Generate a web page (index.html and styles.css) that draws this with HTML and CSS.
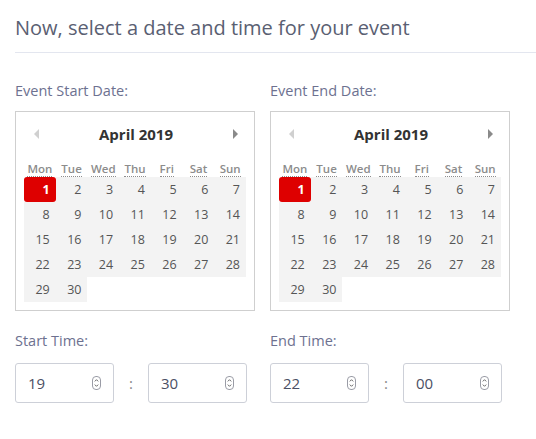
FILE: index.html
```html
<!DOCTYPE html>
<html>
<head>
<meta charset="utf-8">
<link rel="stylesheet" href="styles.css">
</head>
<body>
<div class="page">
  <h1 class="heading">Now, select a date and time for your event</h1>
  <div class="cols">
    <div class="col">
      <div class="label">Event Start Date:</div>
      <div class="cal">
        <div class="cal-head">
          <span class="arrow prev"></span>
          <span class="cal-title">April 2019</span>
          <span class="arrow next"></span>
        </div>
        <div class="dow">
          <span><abbr>Mon</abbr></span><span><abbr>Tue</abbr></span><span><abbr>Wed</abbr></span><span><abbr>Thu</abbr></span><span><abbr>Fri</abbr></span><span><abbr>Sat</abbr></span><span><abbr>Sun</abbr></span>
        </div>
        <div class="days">
          <span class="sel">1</span><span>2</span><span>3</span><span>4</span><span>5</span><span>6</span><span>7</span>
          <span>8</span><span>9</span><span>10</span><span>11</span><span>12</span><span>13</span><span>14</span>
          <span>15</span><span>16</span><span>17</span><span>18</span><span>19</span><span>20</span><span>21</span>
          <span>22</span><span>23</span><span>24</span><span>25</span><span>26</span><span>27</span><span>28</span>
          <span>29</span><span>30</span>
        </div>
      </div>
      <div class="label time-label">Start Time:</div>
      <div class="time">
        <div class="num"><span>19</span><i class="spin"><svg viewBox="0 0 9 14" width="9" height="14"><rect x="0.5" y="0.5" width="8" height="13" rx="3.5" fill="none" stroke="#9a9ca6"/><path d="M2.8 5.4 L4.5 3.7 L6.2 5.4 M2.8 8.6 L4.5 10.3 L6.2 8.6" fill="none" stroke="#555" stroke-width="0.9"/></svg></i></div>
        <span class="colon">:</span>
        <div class="num"><span>30</span><i class="spin"><svg viewBox="0 0 9 14" width="9" height="14"><rect x="0.5" y="0.5" width="8" height="13" rx="3.5" fill="none" stroke="#9a9ca6"/><path d="M2.8 5.4 L4.5 3.7 L6.2 5.4 M2.8 8.6 L4.5 10.3 L6.2 8.6" fill="none" stroke="#555" stroke-width="0.9"/></svg></i></div>
      </div>
    </div>
    <div class="col">
      <div class="label">Event End Date:</div>
      <div class="cal">
        <div class="cal-head">
          <span class="arrow prev"></span>
          <span class="cal-title">April 2019</span>
          <span class="arrow next"></span>
        </div>
        <div class="dow">
          <span><abbr>Mon</abbr></span><span><abbr>Tue</abbr></span><span><abbr>Wed</abbr></span><span><abbr>Thu</abbr></span><span><abbr>Fri</abbr></span><span><abbr>Sat</abbr></span><span><abbr>Sun</abbr></span>
        </div>
        <div class="days">
          <span class="sel">1</span><span>2</span><span>3</span><span>4</span><span>5</span><span>6</span><span>7</span>
          <span>8</span><span>9</span><span>10</span><span>11</span><span>12</span><span>13</span><span>14</span>
          <span>15</span><span>16</span><span>17</span><span>18</span><span>19</span><span>20</span><span>21</span>
          <span>22</span><span>23</span><span>24</span><span>25</span><span>26</span><span>27</span><span>28</span>
          <span>29</span><span>30</span>
        </div>
      </div>
      <div class="label time-label">End Time:</div>
      <div class="time">
        <div class="num"><span>22</span><i class="spin"><svg viewBox="0 0 9 14" width="9" height="14"><rect x="0.5" y="0.5" width="8" height="13" rx="3.5" fill="none" stroke="#9a9ca6"/><path d="M2.8 5.4 L4.5 3.7 L6.2 5.4 M2.8 8.6 L4.5 10.3 L6.2 8.6" fill="none" stroke="#555" stroke-width="0.9"/></svg></i></div>
        <span class="colon">:</span>
        <div class="num"><span>00</span><i class="spin"><svg viewBox="0 0 9 14" width="9" height="14"><rect x="0.5" y="0.5" width="8" height="13" rx="3.5" fill="none" stroke="#9a9ca6"/><path d="M2.8 5.4 L4.5 3.7 L6.2 5.4 M2.8 8.6 L4.5 10.3 L6.2 8.6" fill="none" stroke="#555" stroke-width="0.9"/></svg></i></div>
      </div>
    </div>
  </div>
</div>
</body>
</html>
```
FILE: styles.css
```css
* { box-sizing: border-box; }
html, body { margin: 0; padding: 0; background: #fff; }
body { font-family: "Open Sans", "Lato", sans-serif; overflow: hidden; }
.page { padding-left: 15px; }
.heading {
  margin: 0;
  padding: 16px 0 12px;
  font-size: 20px;
  line-height: 24px;
  font-weight: 400;
  color: #5a6072;
  border-bottom: 1px solid #e3e6ef;
}
.cols {
  display: grid;
  grid-template-columns: 255px 255px;
  padding-top: 28px;
}
.label {
  font-size: 14.5px;
  line-height: 20px;
  color: #6d7190;
  margin-bottom: 10px;
}
.time-label { margin-top: 20px; margin-bottom: 12px; }
.cal {
  width: 240px;
  height: 200px;
  border: 1px solid #cfcfcf;
  padding: 0 7px 0 8px;
}
.cal-head {
  height: 44px;
  display: flex;
  align-items: center;
  justify-content: space-between;
  padding: 0 9px 0 10px;
}
.cal-title {
  font-weight: 700;
  font-size: 15px;
  color: #333;
}
.arrow { width: 0; height: 0; border-top: 5px solid transparent; border-bottom: 5px solid transparent; }
.prev { border-right: 5px solid #d0d0d0; }
.next { border-left: 5px solid #8a8a8a; }
.dow {
  display: grid;
  grid-template-columns: repeat(7, 1fr);
  width: 222px;
  height: 21px;
}
.dow span { text-align: center; }
.dow abbr {
  display: inline-block;
  text-decoration: none;
  font-size: 11.5px;
  line-height: 14px;
  font-weight: 600;
  color: #8c8c8c;
  border-bottom: 1px dotted #8c8c8c;
}
.days {
  display: grid;
  grid-template-columns: repeat(7, 1fr);
  grid-auto-rows: 25px;
  width: 222px;
}
.days span {
  background: #f3f3f3;
  text-align: right;
  padding-right: 6px;
  font-size: 12.5px;
  line-height: 25px;
  color: #555;
}
.days span.sel {
  background: #de0000;
  color: #fff;
  font-weight: 700;
  border-radius: 3px;
}
.time {
  display: flex;
  align-items: center;
}
.num {
  width: 99px;
  height: 40px;
  border: 1px solid #cdd0d8;
  border-radius: 3px;
  display: flex;
  align-items: center;
  justify-content: space-between;
  padding: 0 12px 0 12px;
  font-size: 15px;
  color: #4b5064;
}
.spin { display: flex; font-style: normal; }
.colon {
  width: 34px;
  text-align: center;
  color: #888;
  font-size: 15px;
}
```
